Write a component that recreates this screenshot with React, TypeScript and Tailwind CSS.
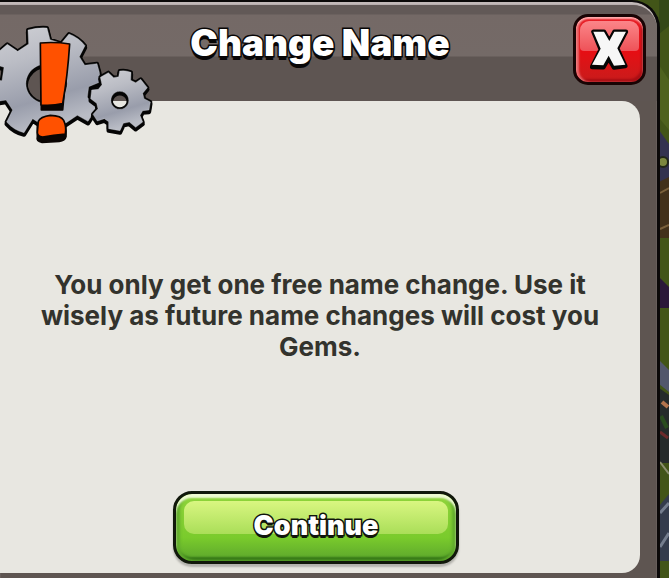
const BIG_GEAR =
  "M84 84Q112 76 141 78L150 113L184 124L207 96Q236 107 255 131L238 164L254 190L291 185Q301 212 300 240L266 254L262 286L291 316L264 358L232 340L190 368L140 378L98 350L72 392Q42 385 20 360L38 324L18 294L-20 300V234L6 236L12 196L-12 188V156L22 127L53 148L86 126Z M139 186a62 59 0 1 0 1 0Z";

const SMALL_GEAR =
  "M359 207Q377 204 393 211L392 235L407 242L422 232L442 257L428 274L432 290L451 300L447 324L428 326L420 340L428 360L407 376L388 360L370 364L360 386L326 380L326 359L313 350L292 357L279 337L294 320L290 304L272 290L275 264L295 262L306 248L301 226L325 212L341 227L356 224Z M359 268a27 27 0 1 0 1 0Z";

const GearsIcon = () => (
  <svg viewBox="0 0 510 450" className="w-[170px]" aria-hidden="true">
    <defs>
      <linearGradient id="metal" x1="0" y1="0" x2="0.3" y2="1">
        <stop offset="0" stopColor="#cfd0d5" />
        <stop offset="0.35" stopColor="#bbbdc5" />
        <stop offset="0.75" stopColor="#999dab" />
        <stop offset="1" stopColor="#b9bcc5" />
      </linearGradient>
    </defs>
    {[BIG_GEAR, SMALL_GEAR].map((shape) => (
      <g key={shape} fillRule="evenodd" strokeLinejoin="round">
        <path d={shape} transform="translate(0 6)" fill="#050505" stroke="#050505" strokeWidth="13" />
        <path d={shape} fill="url(#metal)" stroke="#050505" strokeWidth="12" />
        <path d={shape} fill="url(#metal)" stroke="#d9dbe0" strokeWidth="1" />
      </g>
    ))}
    <g stroke="#0a0503" strokeWidth="5" strokeLinejoin="round">
      <path d="M124 137H205L188 324H124Z" fill="#0a0503" />
      <path d="M121 123Q165 119 209 126Q203 220 188 305Q156 312 123 309Z" fill="#ff5100" />
      <path d="M112 372Q113 360 126 357Q160 346 190 358Q200 370 198 404Q195 417 178 418L126 421Q108 419 112 404Z" fill="#0a0503" />
      <path d="M115 358Q121 344 151 340Q184 341 191 355Q200 374 196 396Q160 399 128 405Q112 404 112 391Z" fill="#ff5100" />
    </g>
  </svg>
);

const CloseIcon = () => (
  <svg viewBox="0 0 120 126" className="relative h-[42px] w-[40px]" aria-hidden="true">
    <path
      d="M10 8L42 8L58 36L73 8H108L82 58L106 111L72 116L56 88L40 115L6 114L32 61Z"
      fill="#050505"
      stroke="#050505"
      strokeWidth="13"
      strokeLinejoin="round"
    />
    <path d="M10 8L42 8L58 36L73 8H108L82 58L106 107L72 110L56 80L40 109L6 107L32 59Z" fill="#f7f7f7" />
  </svg>
);

// sliver of the village that shows behind the dialog
const Village = () => (
  <svg viewBox="0 0 40 578" preserveAspectRatio="xMaxYMin slice" className="absolute right-0 top-0 h-full w-10" aria-hidden="true">
    <path d="M0 0H40V578H0Z" fill="#425518" />
    <path d="M30 0H40V26L30 34Z" fill="#344817" />
    <path d="M30 65L40 80V130L30 118Z" fill="#4e621e" />
    <path d="M30 130L40 144V182H30Z" fill="#33324f" />
    <circle cx="34" cy="162" r="5" fill="#7c8740" stroke="#222719" strokeWidth="2" />
    <path d="M30 182L40 177V238H30Z" fill="#42311b" />
    <path d="M31 193L40 188M31 229L40 225" stroke="#7b613c" strokeWidth="2" />
    <path d="M31 278L40 287V308H31Z" fill="#2b1839" />
    <path d="M30 360L40 370V392L30 384Z" fill="#52576c" />
    <path d="M30 388L40 395V463H30Z" fill="#252b2b" />
    <path d="M33 402L39 407" stroke="#b2744d" strokeWidth="4" />
    <path d="M32 416L38 428" stroke="#294c1f" strokeWidth="4" />
    <path d="M31 432L39 438" stroke="#6c2b2c" strokeWidth="3" />
    <path d="M31 462L40 474" stroke="#8d9070" strokeWidth="2" />
    <path d="M30 506L40 494V561H30Z" fill="#343c4c" />
    <path d="M31 513L40 503M31 547L40 533" stroke="#747d8d" strokeWidth="3" />
  </svg>
);

export default function App() {
  return (
    <main className="relative flex min-h-screen overflow-hidden bg-[#425518] pr-[9px] font-['Inter',sans-serif]">
      <Village />
      <section
        role="dialog"
        aria-labelledby="dialog-title"
        className="relative flex flex-1 flex-col rounded-tr-[28px] border-r-[3px] border-t-2 border-[#0b0909] bg-[#5e5551] pb-[5px] shadow-[inset_0_3px_1px_#c2b9b8]"
      >
        <header className="relative mt-[3px] h-[96px] rounded-tr-[24px] bg-[linear-gradient(#625957_9px,#746966_10px,#746a67_51px,#5e5552_52px)]">
          <h1
            id="dialog-title"
            className="mr-[17px] pt-[16px] text-center text-[37px] leading-[44px] font-black text-white [-webkit-text-stroke:3px_#080606] [paint-order:stroke_fill] [text-shadow:0_4px_0_#080606]"
          >
            Change Name
          </h1>
          <button
            aria-label="Close"
            className="absolute top-[9px] right-[11px] flex h-[71px] w-[73px] items-center justify-center rounded-[15px] border-[3px] border-[#180404] bg-linear-to-b from-[#e51b23] via-[#e80c13] to-[#c81b1b] shadow-[inset_0_2px_2px_#ffafb0,inset_3px_0_2px_#e96669,inset_-2px_-3px_2px_#a90e14]"
          >
            <span className="absolute inset-x-[4px] top-[4px] h-[30px] rounded-t-[9px] rounded-b-[4px] bg-linear-to-b from-[#fb8589] to-[#ee5158]" />
            <CloseIcon />
          </button>
        </header>

        <div className="mr-[17px] flex flex-1 flex-col rounded-r-[18px] bg-[#e8e7e1] px-6 pb-[9px]">
          <p className="mt-[168px] text-center text-[26px] leading-[31px] font-bold text-[#33332d]">
            You only get one free name change. Use it wisely as future name changes will cost you Gems.
          </p>
          <div className="mt-auto flex justify-center pr-2">
            <button className="relative flex h-[73px] w-[286px] items-center justify-center rounded-[19px] border-[3px] border-[#11180b] bg-linear-to-b from-[#8fd43b] via-[#7acb2c] via-65% to-[#5ba52c] shadow-[0_3px_2px_#b4b3ae,inset_0_4px_2px_#effbd2,inset_4px_0_3px_#62ac2d,inset_-4px_0_3px_#62ac2d,inset_0_-4px_2px_#367818]">
              <span className="absolute inset-x-[8px] top-[7px] h-[33px] rounded-[10px] bg-linear-to-b from-[#d9f681] to-[#aade58]" />
              <span className="relative pb-[4px] text-[27px] leading-[30px] font-black text-white [-webkit-text-stroke:3px_#10150c] [paint-order:stroke_fill] [text-shadow:0_3px_0_#10150c]">
                Continue
              </span>
            </button>
          </div>
        </div>

        <div className="absolute top-0 left-0">
          <GearsIcon />
        </div>
      </section>
    </main>
  );
}
